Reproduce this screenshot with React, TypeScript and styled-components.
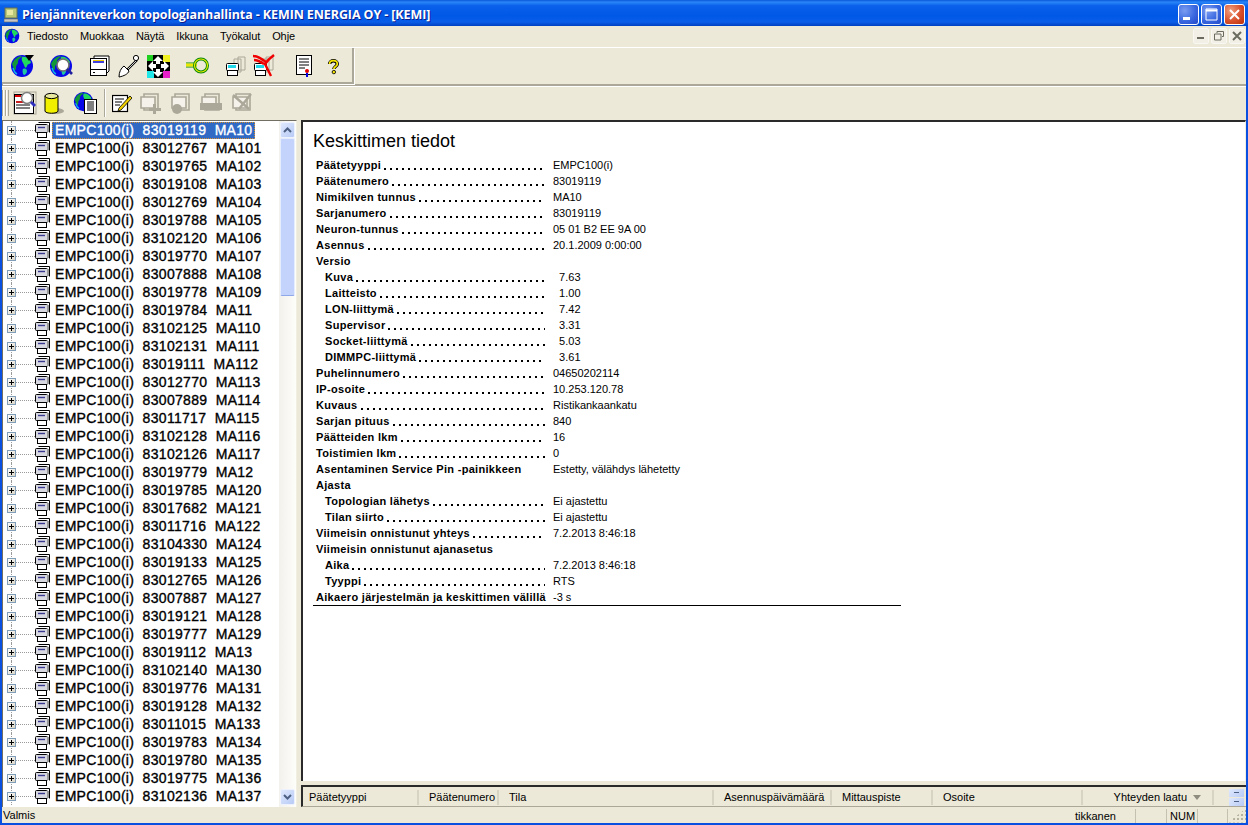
import styled, { createGlobalStyle } from "styled-components";

const GlobalStyle = createGlobalStyle`
  html, body {
    margin: 0;
    padding: 0;
    background: #ece9d8;
    overflow: hidden;
  }
  * {
    box-sizing: border-box;
  }
`;

const Window = styled.div`
  width: 1248px;
  height: 825px;
  display: flex;
  flex-direction: column;
  font-family: "Liberation Sans", Arial, sans-serif;
  font-size: 11px;
  color: #000;
  overflow: hidden;
`;

const TitleBar = styled.div`
  height: 26px;
  flex: none;
  display: flex;
  align-items: center;
  padding: 3px 3px 0 4px;
  background: linear-gradient(180deg, #0a58d8 0%, #2a86f8 8%, #0a60ea 22%, #0058e6 60%, #0a5ee8 85%, #0040c0 100%);
`;

const TitleText = styled.div`
  flex: 1;
  margin-left: 4px;
  color: #fff;
  font-family: "Open Sans", sans-serif;
  font-weight: 700;
  font-size: 12.5px;
  letter-spacing: -0.1px;
  white-space: pre;
  text-shadow: 1px 1px 0 #0f1e8a;
`;

const CaptionButton = styled.div<{ $red?: boolean }>`
  width: 21px;
  height: 21px;
  margin-left: 2px;
  border: 1px solid #fff;
  border-radius: 3px;
  display: flex;
  align-items: center;
  justify-content: center;
  background: ${(p) =>
    p.$red
      ? "radial-gradient(circle at 30% 30%, #f0a080, #d8502c 55%, #b83008)"
      : "radial-gradient(circle at 30% 30%, #7a9cf0, #3a68e0 55%, #2448c8)"};
`;

const Body = styled.div`
  flex: 1;
  min-height: 0;
  display: flex;
  flex-direction: column;
  background: #ece9d8;
  border-left: 2px solid #0a50e0;
  border-right: 2px solid #0a50e0;
  border-bottom: 2px solid #0a50e0;
`;

const MenuBar = styled.div`
  height: 22px;
  flex: none;
  display: flex;
  align-items: center;
  padding-bottom: 2px;
  border-bottom: 1px solid #fff;
`;

const MenuLogo = styled.div`
  width: 16px;
  height: 16px;
  margin: 0 7px 0 2px;
`;

const MenuItem = styled.span`
  margin-right: 12px;
  letter-spacing: -0.1px;
`;

const MdiButtons = styled.div`
  margin-left: auto;
  display: flex;
  gap: 2px;
  padding-right: 1px;
`;

const MdiButton = styled.div`
  width: 16px;
  height: 16px;
  border-radius: 2px;
  display: flex;
  align-items: center;
  justify-content: center;
  background: #f1efe6;
  border: 1px solid #f8f7f1;
`;

const ToolRow = styled.div`
  height: 38px;
  flex: none;
  border-bottom: 2px solid #aca899;
  box-shadow: 0 1px 0 #fff;
  display: flex;
`;

const ToolGroup = styled.div`
  width: 352px;
  height: 36px;
  display: flex;
  align-items: center;
  padding: 2px 0 0 6px;
  border-right: 2px solid #aca899;
  border-bottom: 2px solid #aca899;
  box-shadow: 1px 1px 0 #fff;
`;

const ToolRowSecond = styled.div`
  height: 34px;
  flex: none;
  display: flex;
  align-items: center;
`;

const Grip = styled.div`
  width: 7px;
  height: 26px;
  background: repeating-linear-gradient(90deg, #aca899 0 1px, #fff 1px 2px, #ece9d8 2px 3px);
`;

const ToolButton = styled.div<{ $gap: number }>`
  width: 28px;
  height: 28px;
  flex: none;
  margin-left: ${(p) => p.$gap}px;
  display: flex;
  align-items: center;
  justify-content: center;
`;

const ToolSeparator = styled.div`
  width: 2px;
  height: 28px;
  flex: none;
  margin-left: 5px;
  border-left: 1px solid #aca899;
  border-right: 1px solid #fff;
`;

const Main = styled.div`
  flex: 1;
  min-height: 0;
  display: flex;
`;

const TreePanel = styled.div`
  width: 295px;
  flex: none;
  display: flex;
  background: #fff;
  border-top: 1px solid #716f64;
  border-left: 1px solid #716f64;
  border-right: 1px solid #f1efe2;
`;

const TreeList = styled.div`
  flex: 1;
  min-width: 0;
  overflow: hidden;
`;

const TreeRow = styled.div`
  position: relative;
  height: 18px;
  display: flex;
  align-items: center;
  padding-left: 4px;
  &::before {
    content: "";
    position: absolute;
    left: 8px;
    top: 0;
    bottom: 0;
    border-left: 1px dotted #9a9a9a;
  }
`;

const Expander = styled.div`
  position: relative;
  z-index: 1;
  width: 9px;
  height: 9px;
  flex: none;
  background: linear-gradient(135deg, #fff, #d8d4c4);
  border: 1px solid #7f9db9;
  display: flex;
  align-items: center;
  justify-content: center;
`;

const Connector = styled.div`
  width: 19px;
  flex: none;
  border-top: 1px dotted #9a9a9a;
`;

const RowIcon = styled.div`
  width: 15px;
  height: 16px;
  flex: none;
  margin-right: 2px;
`;

const RowLabel = styled.div<{ $selected?: boolean }>`
  height: 17px;
  line-height: 17px;
  padding: 0 3px;
  font-size: 14px;
  white-space: pre;
  letter-spacing: 0.3px;
  color: ${(p) => (p.$selected ? "#fff" : "#000")};
  background: ${(p) => (p.$selected ? "#316ac5" : "transparent")};
  outline: ${(p) => (p.$selected ? "1px dotted #d89030" : "none")};
  outline-offset: -1px;
  -webkit-text-stroke: 0.35px currentColor;
`;

const ScrollBar = styled.div`
  width: 17px;
  flex: none;
  display: flex;
  flex-direction: column;
  padding: 1px 1px 2px;
  background: linear-gradient(90deg, #f3f1ec, #fdfdfa);
`;

const ScrollButton = styled.div`
  width: 15px;
  height: 16px;
  flex: none;
  border-radius: 2px;
  border: 1px solid #eef2fd;
  background: linear-gradient(135deg, #dfe8fd, #b8cbf6);
  display: flex;
  align-items: center;
  justify-content: center;
`;

const ScrollThumb = styled.div`
  width: 15px;
  height: 158px;
  border-radius: 2px;
  background: #c3d3fb;
  border: 1px solid #e6edfd;
  border-bottom-color: #8fa8ea;
`;

const ScrollTrack = styled.div`
  flex: 1;
`;

const RightColumn = styled.div`
  flex: 1;
  min-width: 0;
  display: flex;
  flex-direction: column;
  margin-left: 4px;
`;

const DetailPane = styled.div`
  flex: 1;
  min-height: 0;
  background: #fff;
  border-top: 2px solid #2a2a2a;
  border-left: 2px solid #2a2a2a;
  border-right: 1px solid #f1efe2;
  padding: 8px 0 0 10px;
  overflow: hidden;
`;

const PaneTitle = styled.div`
  font-size: 18px;
  line-height: 22px;
  margin-bottom: 5px;
`;

const InfoTable = styled.div`
  width: 588px;
  padding-left: 3px;
  border-bottom: 1px solid #000;
`;

const InfoRow = styled.div<{ $sub?: boolean }>`
  height: 16px;
  line-height: 16px;
  display: flex;
  padding-left: ${(p) => (p.$sub ? 9 : 0)}px;
  white-space: pre;
`;

const InfoLabel = styled.div`
  flex: 1;
  min-width: 0;
  display: flex;
  font-weight: 700;
  letter-spacing: 0.3px;
`;

const Leader = styled.span`
  flex: 1;
  min-width: 0;
  margin: 0 8px 0 3px;
  background: linear-gradient(90deg, #000 2px, transparent 2px) 0 11px / 6px 2px repeat-x;
`;

const InfoValue = styled.div`
  flex: none;
  width: 348px;
`;

const ListHeader = styled.div`
  height: 22px;
  flex: none;
  margin-top: 4px;
  padding-top: 1px;
  display: flex;
  align-items: center;
  background: #ece9d8;
  border-top: 2px solid #2a2a2a;
  border-left: 2px solid #2a2a2a;
  border-bottom: 1px solid #aca899;
`;

const HeaderCell = styled.div<{ $width: number; $right?: boolean }>`
  width: ${(p) => p.$width}px;
  flex: none;
  height: 15px;
  line-height: 15px;
  white-space: pre;
  display: flex;
  align-items: center;
  justify-content: ${(p) => (p.$right ? "flex-end" : "flex-start")};
  padding: ${(p) => (p.$right ? "0 11px 0 0" : "0 0 0 10px")};
  border-right: 2px solid #d8d4c4;
  &:first-child {
    padding-left: 6px;
  }
`;

const SortArrow = styled.span`
  margin-left: 6px;
  width: 0;
  height: 0;
  border-left: 4px solid transparent;
  border-right: 4px solid transparent;
  border-top: 5px solid #8f8c80;
`;

const SpinColumn = styled.div`
  margin-left: 15px;
  width: 15px;
  display: flex;
  flex-direction: column;
  gap: 1px;
`;

const SpinButton = styled.div`
  height: 8px;
  background: linear-gradient(135deg, #dfe8fd, #b8cbf6);
  display: flex;
  align-items: center;
  justify-content: center;
  &::after {
    content: "";
    width: 5px;
    height: 1px;
    background: #4d6185;
  }
`;

const StatusBar = styled.div`
  height: 16px;
  flex: none;
  padding-top: 1px;
  display: flex;
  align-items: center;
  line-height: 15px;
`;

const StatusMain = styled.div`
  flex: 1;
  padding-left: 1px;
`;

const StatusCell = styled.div<{ $width: number }>`
  width: ${(p) => p.$width}px;
  flex: none;
  height: 14px;
  line-height: 14px;
  padding-left: 3px;
  white-space: pre;
  border-right: 1px solid #c4c1b0;
`;

const SizeGrip = styled.div`
  width: 18px;
  height: 14px;
  flex: none;
  background: radial-gradient(circle, #b4b19f 1px, transparent 1.2px) 0 0 / 4px 4px;
  clip-path: polygon(100% 0, 100% 100%, 0 100%);
`;

const IconStack = styled.div`
  position: relative;
  width: 24px;
  height: 24px;
`;

const DocOverlay = styled.div`
  position: absolute;
  right: 0;
  bottom: 1px;
  line-height: 0;
`;

const LensOverlay = styled.div`
  position: absolute;
  left: 7px;
  top: 4px;
  line-height: 0;
`;

const Globe = ({ size = 24, marker }: { size?: number; marker?: boolean }) => (
  <svg width={size} height={size} viewBox="0 0 24 24">
    <circle cx="12" cy="12" r="11" fill="#0808e8" />
    <path d="M2 10c2-5 6-8 10-8-1 2-4 3-4 6s-2 2-2 6-2 2-4-4z" fill="#109838" />
    <path d="M12 3c3-1 7 1 9 5-1 3-3 1-4 4s-2 2-3-1-3-4-2-8z" fill="#20d860" />
    <path d="M13 15c2-1 4 0 4 2s-2 4-3 4-2-4-1-6z" fill="#20c8a0" />
    <path d="M3 14c1 3 2 5 4 6" stroke="#10b8e8" strokeWidth="1.4" fill="none" />
    {marker && <path d="M15 1h9l-5 6z" fill="#000" />}
  </svg>
);

const Lens = () => (
  <svg width="17" height="18" viewBox="0 0 17 18">
    <circle cx="7" cy="7" r="6" fill="#fff" stroke="#707070" strokeWidth="1.6" />
    <path d="M11 11l5 5" stroke="#2020a0" strokeWidth="2.6" />
  </svg>
);

const Terminal = () => (
  <svg width="22" height="24" viewBox="0 0 22 24">
    <path d="M5 2h15v15l-3 3V5H5z" fill="#fff" stroke="#000" />
    <rect x="1.5" y="4.5" width="16" height="11" fill="#fff" stroke="#000" />
    <path d="M4 8h11" stroke="#0000d0" strokeWidth="1.5" />
    <path d="M4 6.5h11" stroke="#f0d000" />
    <rect x="1.5" y="15.5" width="16" height="6" fill="#fff" stroke="#000" />
    <path d="M4 18.5h2" stroke="#000" />
  </svg>
);

const Shovel = () => (
  <svg width="24" height="24" viewBox="0 0 24 24">
    <path d="M21 6L11 16" stroke="#000" strokeWidth="2.4" />
    <path d="M21 6L11 16" stroke="#fff" strokeWidth="0.8" />
    <circle cx="20" cy="4" r="2.6" fill="#fff" stroke="#000" />
    <path d="M8 12l5 5c-1 3-5 5-10 6 0-5 2-9 5-11z" fill="#fff" stroke="#000" />
  </svg>
);

const ArrowBlock = () => (
  <svg width="23" height="23" viewBox="0 0 23 23">
    <rect width="23" height="23" fill="#000" />
    <rect x="0" y="0" width="6" height="6" fill="#20d020" />
    <rect x="16" y="0" width="7" height="7" fill="#f0f020" />
    <rect x="0" y="16" width="7" height="7" fill="#20e8e8" />
    <rect x="16" y="16" width="7" height="7" fill="#e820c8" />
    <path d="M11 1l5 5h-3v3h-4V6H6zM1 11l5-5v3h3v4H6v3zM11 22l-5-5h3v-3h4v3h3zM22 11l-5 5v-3h-3V9h3V6z" fill="#fff" />
  </svg>
);

const Ring = () => (
  <svg width="24" height="18" viewBox="0 0 24 18">
    <path d="M1 6h10M1 10h10" stroke="#0a8a0a" strokeWidth="1" />
    <path d="M1 8h11" stroke="#e8e800" strokeWidth="3" />
    <circle cx="16" cy="8.5" r="6.5" fill="none" stroke="#0a8a0a" strokeWidth="3" />
    <circle cx="16" cy="8.5" r="6.5" fill="none" stroke="#e8e800" strokeWidth="1.2" />
  </svg>
);

const DeviceStack = ({ crossed }: { crossed?: boolean }) => (
  <svg width="24" height="24" viewBox="0 0 24 24">
    <path d="M14 3h7v13h-7zM10 5h7v13h-7z" fill="#ece9d8" stroke="#aca899" />
    <rect x="2.5" y="9.5" width="12" height="7" rx="1" fill="#fff" stroke="#000" />
    <rect x="4" y="11" width="8" height="3" fill="#20d8e8" />
    <rect x="3.5" y="16.5" width="10" height="5" fill="#fff" stroke="#000" />
    {crossed && (
      <path d="M1 2c5 0 9 3 13 6M22 1c-4 3-7 6-9 9 2 4 4 8 6 12M12 10c-3-2-7-4-10-4" stroke="#f00000" strokeWidth="2.4" fill="none" />
    )}
  </svg>
);

const Certificate = () => (
  <svg width="18" height="24" viewBox="0 0 18 24">
    <rect x="1.5" y="1.5" width="15" height="19" fill="#fff" stroke="#000" />
    <path d="M4 5h10M4 8h10M4 11h10M4 14h6" stroke="#000" />
    <path d="M12 19v4" stroke="#0000e0" strokeWidth="2" />
    <circle cx="12" cy="17" r="2" fill="#e00000" />
  </svg>
);

const Question = () => (
  <svg width="12" height="17" viewBox="0 0 14 18">
    <path d="M3 6c0-5 9-5 9 0 0 3-4 3-4 6" fill="none" stroke="#000" strokeWidth="4" />
    <path d="M3 6c0-5 9-5 9 0 0 3-4 3-4 6" fill="none" stroke="#f8e800" strokeWidth="2" />
    <circle cx="8" cy="15.5" r="2" fill="#f8e800" stroke="#000" />
  </svg>
);

const ReportSearch = () => (
  <svg width="24" height="24" viewBox="0 0 24 24">
    <rect x="1" y="1" width="22" height="22" fill="#ece9d8" stroke="#aca899" />
    <rect x="1.5" y="3.5" width="19" height="19" fill="#fff" stroke="#000" />
    <path d="M2 5h6" stroke="#e00000" strokeWidth="2" />
    <path d="M3 11h14M3 14h14M3 17h14" stroke="#000" />
    <path d="M3 11h8" stroke="#e00000" strokeWidth="1.5" />
    <circle cx="14" cy="7" r="5.5" fill="#fff" stroke="#808080" strokeWidth="1.5" />
    <path d="M18 11l4 4" stroke="#3030c0" strokeWidth="3" />
  </svg>
);

const Cylinder = () => (
  <svg width="24" height="24" viewBox="0 0 24 24">
    <ellipse cx="14" cy="20" rx="8" ry="3" fill="#aca899" />
    <path d="M3 5v15c0 3 13 3 13 0V5z" fill="#f0f000" stroke="#000" />
    <ellipse cx="9.5" cy="5" rx="6.5" ry="2.6" fill="#e8e8a0" stroke="#000" />
  </svg>
);

const GlobeDoc = () => (
  <IconStack>
    <Globe size={21} />
    <DocOverlay>
      <svg width="13" height="15" viewBox="0 0 13 15">
        <rect x="0.5" y="0.5" width="12" height="14" fill="#fff" stroke="#000" />
        <path d="M3 3h7M3 5h7M3 7h7M3 9h7M3 11h7" stroke="#000" />
      </svg>
    </DocOverlay>
  </IconStack>
);

const Note = () => (
  <svg width="20" height="20" viewBox="0 0 20 20">
    <rect x="0.5" y="2.5" width="15" height="16" fill="#fff" stroke="#000" strokeWidth="1.2" />
    <path d="M3 6h9M3 9h7M3 12h5" stroke="#000" />
    <path d="M18 3L7 15l-1 3 3-1L20 5z" fill="#f0d000" stroke="#000" strokeWidth="0.8" />
  </svg>
);

const DisabledBlock = ({ variant }: { variant: number }) => (
  <svg width="24" height="24" viewBox="0 0 24 24">
    <path d="M6 3h14v16H6z" fill="#ece9d8" stroke="#aca899" strokeWidth="1.6" />
    <path d="M3 6h14v11H3z" fill="#f4f2ea" stroke="#aca899" strokeWidth="1.6" />
    {variant === 0 && <path d="M11 17h12v3H11zM15 13h3v10h-3z" fill="#aca899" />}
    {variant === 1 && <circle cx="8" cy="18" r="5" fill="#aca899" />}
    {variant === 2 && <rect x="1" y="12" width="22" height="7" fill="#aca899" />}
    {variant === 3 && <path d="M3 4l16 14M21 3L9 18" stroke="#aca899" strokeWidth="2.4" />}
  </svg>
);

const LeafDevice = () => (
  <svg width="15" height="16" viewBox="0 0 15 16">
    <path d="M3.5 .5h11v10" fill="none" stroke="#000" />
    <rect x="0.5" y="2.5" width="12" height="8" rx="1" fill="#d8d8e0" stroke="#000" />
    <path d="M3 5.5h7" stroke="#3a3a90" strokeWidth="1.4" />
    <rect x="2.5" y="10.5" width="9" height="5" fill="#fff" stroke="#000" />
    <path d="M12 3h2v7h-2" fill="#9a9a9a" />
  </svg>
);

const ChevronUp = () => (
  <svg width="9" height="6" viewBox="0 0 9 6">
    <path d="M1 5l3.5-3.5L8 5" fill="none" stroke="#4d6185" strokeWidth="2" />
  </svg>
);

const ChevronDown = () => (
  <svg width="9" height="6" viewBox="0 0 9 6">
    <path d="M1 1l3.5 3.5L8 1" fill="none" stroke="#4d6185" strokeWidth="2" />
  </svg>
);

const PlusGlyph = () => (
  <svg width="7" height="7" viewBox="0 0 7 7">
    <path d="M1 3.5h5M3.5 1v5" stroke="#000" />
  </svg>
);

const menus = ["Tiedosto", "Muokkaa", "Näytä", "Ikkuna", "Työkalut", "Ohje"];

const devices = [
  ["83019119", "MA10"], ["83012767", "MA101"], ["83019765", "MA102"], ["83019108", "MA103"],
  ["83012769", "MA104"], ["83019788", "MA105"], ["83102120", "MA106"], ["83019770", "MA107"],
  ["83007888", "MA108"], ["83019778", "MA109"], ["83019784", "MA11"], ["83102125", "MA110"],
  ["83102131", "MA111"], ["83019111", "MA112"], ["83012770", "MA113"], ["83007889", "MA114"],
  ["83011717", "MA115"], ["83102128", "MA116"], ["83102126", "MA117"], ["83019779", "MA12"],
  ["83019785", "MA120"], ["83017682", "MA121"], ["83011716", "MA122"], ["83104330", "MA124"],
  ["83019133", "MA125"], ["83012765", "MA126"], ["83007887", "MA127"], ["83019121", "MA128"],
  ["83019777", "MA129"], ["83019112", "MA13"], ["83102140", "MA130"], ["83019776", "MA131"],
  ["83019128", "MA132"], ["83011015", "MA133"], ["83019783", "MA134"], ["83019780", "MA135"],
  ["83019775", "MA136"], ["83102136", "MA137"],
];

type Info = { label: string; value?: string; sub?: boolean; plain?: boolean };

const infoRows: Info[] = [
  { label: "Päätetyyppi", value: "EMPC100(i)" },
  { label: "Päätenumero", value: "83019119" },
  { label: "Nimikilven tunnus", value: "MA10" },
  { label: "Sarjanumero", value: "83019119" },
  { label: "Neuron-tunnus", value: "05 01 B2 EE 9A 00" },
  { label: "Asennus", value: "20.1.2009 0:00:00" },
  { label: "Versio", plain: true },
  { label: "Kuva", value: "  7.63", sub: true },
  { label: "Laitteisto", value: "  1.00", sub: true },
  { label: "LON-liittymä", value: "  7.42", sub: true },
  { label: "Supervisor", value: "  3.31", sub: true },
  { label: "Socket-liittymä", value: "  5.03", sub: true },
  { label: "DIMMPC-liittymä", value: "  3.61", sub: true },
  { label: "Puhelinnumero", value: "04650202114" },
  { label: "IP-osoite", value: "10.253.120.78" },
  { label: "Kuvaus", value: "Ristikankaankatu" },
  { label: "Sarjan pituus", value: "840" },
  { label: "Päätteiden lkm", value: "16" },
  { label: "Toistimien lkm", value: "0" },
  { label: "Asentaminen Service Pin -painikkeen", value: "Estetty, välähdys lähetetty", plain: true },
  { label: "Ajasta", plain: true },
  { label: "Topologian lähetys", value: "Ei ajastettu", sub: true },
  { label: "Tilan siirto", value: "Ei ajastettu", sub: true },
  { label: "Viimeisin onnistunut yhteys", value: "7.2.2013 8:46:18" },
  { label: "Viimeisin onnistunut ajanasetus", plain: true },
  { label: "Aika", value: "7.2.2013 8:46:18", sub: true },
  { label: "Tyyppi", value: "RTS", sub: true },
  { label: "Aikaero järjestelmän ja keskittimen välillä", value: "-3 s", plain: true },
];

const columns = [
  { name: "Päätetyyppi", width: 116 },
  { name: "Päätenumero", width: 80 },
  { name: "Tila", width: 215 },
  { name: "Asennuspäivämäärä", width: 118 },
  { name: "Mittauspiste", width: 101 },
  { name: "Osoite", width: 150 },
];

export default function App() {
  return (
    <Window>
      <GlobalStyle />
      <TitleBar>
        <svg width="14" height="16" viewBox="0 0 14 16">
          <rect x="1" y="1" width="12" height="10" fill="#b8c878" stroke="#6a7050" />
          <rect x="3" y="3" width="6" height="5" fill="#e8e8a0" />
          <rect x="0" y="12" width="14" height="3" fill="#c8c8c8" stroke="#606060" strokeWidth="0.6" />
        </svg>
        <TitleText>Pienjänniteverkon topologianhallinta - KEMIN ENERGIA OY - [KEMI]</TitleText>
        <CaptionButton>
          <svg width="13" height="13" viewBox="0 0 13 13">
            <rect x="1" y="9" width="7" height="3" fill="#fff" />
          </svg>
        </CaptionButton>
        <CaptionButton>
          <svg width="13" height="13" viewBox="0 0 13 13">
            <path d="M1 1h11v11H1z" fill="none" stroke="#fff" />
            <path d="M1 2.5h11" stroke="#fff" strokeWidth="2" />
          </svg>
        </CaptionButton>
        <CaptionButton $red>
          <svg width="13" height="13" viewBox="0 0 13 13">
            <path d="M2 2l9 9M11 2l-9 9" stroke="#fff" strokeWidth="2" />
          </svg>
        </CaptionButton>
      </TitleBar>
      <Body>
        <MenuBar>
          <MenuLogo>
            <Globe size={16} />
          </MenuLogo>
          {menus.map((menu) => (
            <MenuItem key={menu}>{menu}</MenuItem>
          ))}
          <MdiButtons>
            <MdiButton>
              <svg width="10" height="10" viewBox="0 0 10 10">
                <rect x="1" y="6" width="7" height="2" fill="#6b6a5e" />
              </svg>
            </MdiButton>
            <MdiButton>
              <svg width="10" height="10" viewBox="0 0 10 10">
                <path d="M3 2V0.5h6.5v5H8M0.5 3h6.5v6H0.5z" fill="none" stroke="#6b6a5e" />
              </svg>
            </MdiButton>
            <MdiButton>
              <svg width="10" height="10" viewBox="0 0 10 10">
                <path d="M1 1l8 8M9 1l-8 8" stroke="#6b6a5e" strokeWidth="2" />
              </svg>
            </MdiButton>
          </MdiButtons>
        </MenuBar>
        <ToolRow>
          <ToolGroup>
            <ToolButton $gap={0}><Globe marker /></ToolButton>
            <ToolButton $gap={11}>
              <IconStack>
                <Globe />
                <LensOverlay><Lens /></LensOverlay>
              </IconStack>
            </ToolButton>
            <ToolButton $gap={11}><Terminal /></ToolButton>
            <ToolButton $gap={0}><Shovel /></ToolButton>
            <ToolButton $gap={2}><ArrowBlock /></ToolButton>
            <ToolButton $gap={11}><Ring /></ToolButton>
            <ToolButton $gap={11}><DeviceStack /></ToolButton>
            <ToolButton $gap={0}><DeviceStack crossed /></ToolButton>
            <ToolButton $gap={12}><Certificate /></ToolButton>
            <ToolButton $gap={1}><Question /></ToolButton>
          </ToolGroup>
        </ToolRow>
        <ToolRowSecond>
          <Grip />
          <ToolButton $gap={2}><ReportSearch /></ToolButton>
          <ToolButton $gap={1}><Cylinder /></ToolButton>
          <ToolButton $gap={3}><GlobeDoc /></ToolButton>
          <ToolSeparator />
          <ToolButton $gap={2}><Note /></ToolButton>
          <ToolButton $gap={0}><DisabledBlock variant={0} /></ToolButton>
          <ToolButton $gap={3}><DisabledBlock variant={1} /></ToolButton>
          <ToolButton $gap={2}><DisabledBlock variant={2} /></ToolButton>
          <ToolButton $gap={3}><DisabledBlock variant={3} /></ToolButton>
        </ToolRowSecond>
        <Main>
          <TreePanel>
            <TreeList>
              {devices.map(([serial, tag], index) => (
                <TreeRow key={tag}>
                  <Expander><PlusGlyph /></Expander>
                  <Connector />
                  <RowIcon><LeafDevice /></RowIcon>
                  <RowLabel $selected={index === 0}>{`EMPC100(i)  ${serial}  ${tag}`}</RowLabel>
                </TreeRow>
              ))}
            </TreeList>
            <ScrollBar>
              <ScrollButton><ChevronUp /></ScrollButton>
              <ScrollThumb />
              <ScrollTrack />
              <ScrollButton><ChevronDown /></ScrollButton>
            </ScrollBar>
          </TreePanel>
          <RightColumn>
            <DetailPane>
              <PaneTitle>Keskittimen tiedot</PaneTitle>
              <InfoTable>
                {infoRows.map((row) => (
                  <InfoRow key={row.label} $sub={row.sub}>
                    <InfoLabel>
                      {row.label}
                      {!row.plain && <Leader />}
                    </InfoLabel>
                    <InfoValue>{row.value}</InfoValue>
                  </InfoRow>
                ))}
              </InfoTable>
            </DetailPane>
            <ListHeader>
              {columns.map((col) => (
                <HeaderCell key={col.name} $width={col.width}>{col.name}</HeaderCell>
              ))}
              <HeaderCell $width={131} $right>
                Yhteyden laatu
                <SortArrow />
              </HeaderCell>
              <SpinColumn>
                <SpinButton />
                <SpinButton />
              </SpinColumn>
            </ListHeader>
          </RightColumn>
        </Main>
        <StatusBar>
          <StatusMain>Valmis</StatusMain>
          <StatusCell $width={64}>tikkanen</StatusCell>
          <StatusCell $width={31} />
          <StatusCell $width={31}>NUM</StatusCell>
          <StatusCell $width={30} />
          <SizeGrip />
        </StatusBar>
      </Body>
    </Window>
  );
}
